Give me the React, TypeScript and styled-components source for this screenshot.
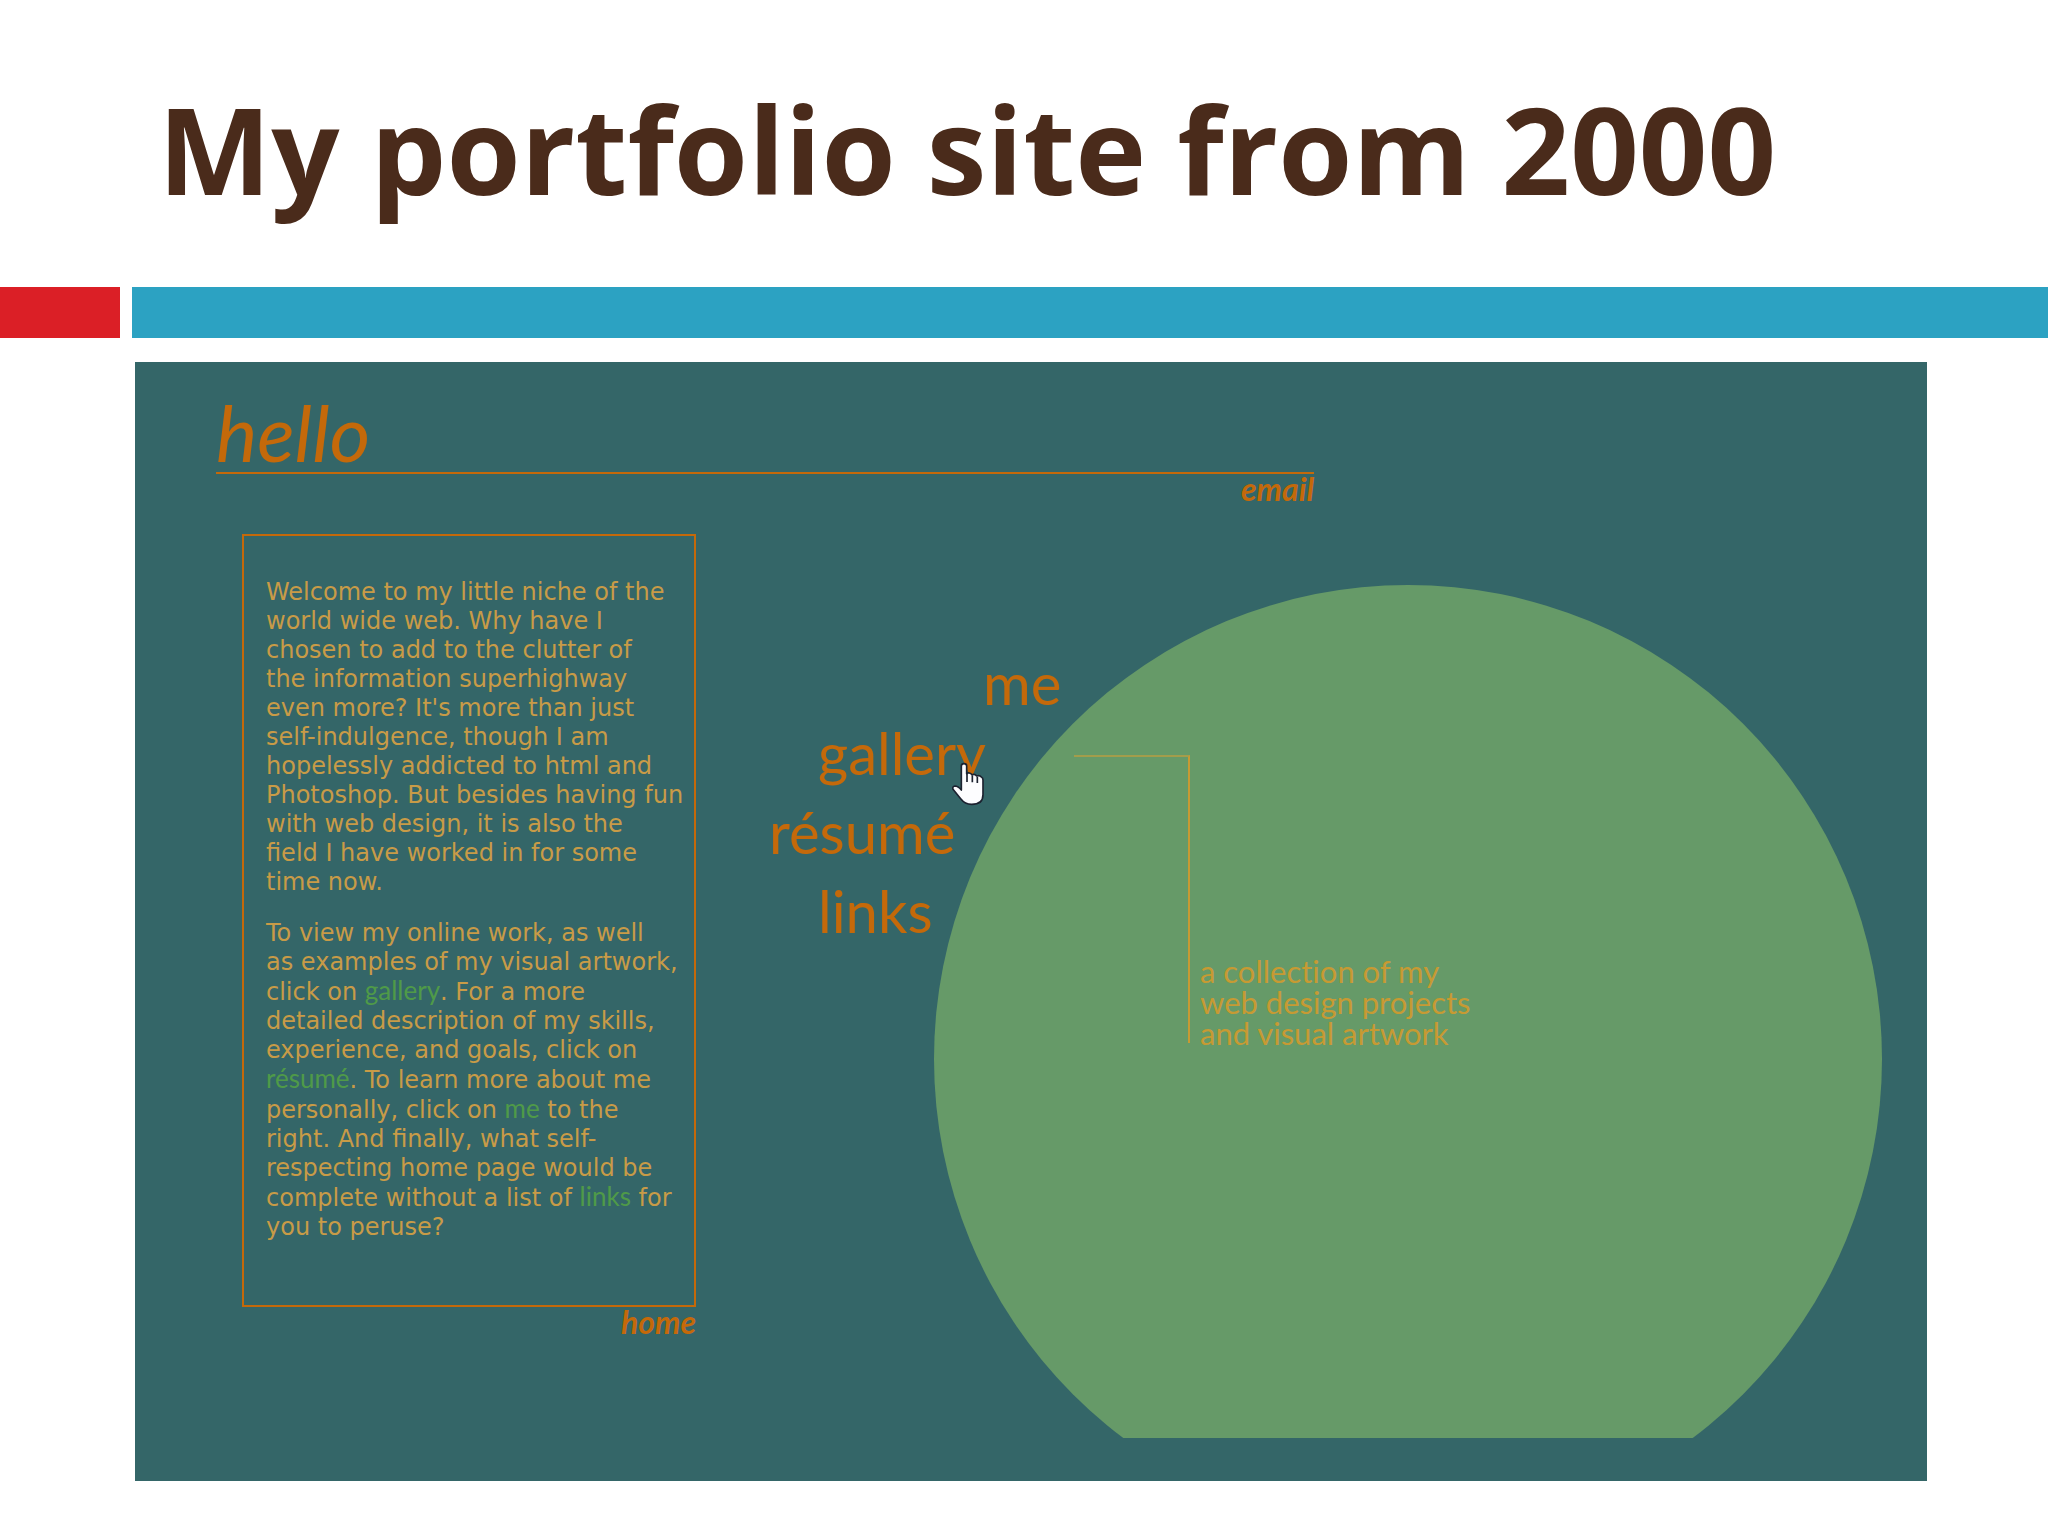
import React from "react";
import styled, { createGlobalStyle } from "styled-components";

const color = {
  title: "#4a2b1b",
  red: "#db1f26",
  blue: "#2ca2c2",
  teal: "#346668",
  leaf: "#669a68",
  orange: "#c4690a",
  sand: "#c89b47",
  link: "#4f9a48",
  note: "#c79a33",
};

const gothic = `"Century Gothic", Lato, sans-serif`;

const GlobalStyle = createGlobalStyle`
  *, *::before, *::after { box-sizing: border-box; }
  body { margin: 0; background: #fff; }
  h1, h2, p { margin: 0; }
  a { color: inherit; text-decoration: none; }
`;

const Slide = styled.div`
  padding-bottom: 55px;
`;

const Title = styled.h1`
  padding: 79px 158px 68px;
  color: ${color.title};
  font: 700 120px/140px "Open Sans", sans-serif;
`;

const Stripe = styled.div`
  display: grid;
  grid-template-columns: 120px 1fr;
  column-gap: 12px;
  height: 51px;
`;

const Block = styled.span<{ $fill: string }>`
  background: ${(p) => p.$fill};
`;

const Site = styled.main`
  margin: 24px 121px 0 135px;
  padding-bottom: 43px;
  background: ${color.teal};
  color: ${color.orange};
  font-family: ${gothic};
`;

const Masthead = styled.header`
  display: flex;
  flex-direction: column;
  width: 65.8%;
  height: 172px;
  padding-left: 81px;
`;

const Greeting = styled.h2`
  height: 112px;
  padding-top: 26px;
  border-bottom: 2px solid ${color.orange};
  font-weight: 400;
  font-style: italic;
  font-size: 78px;
  line-height: 88px;
`;

const CornerLink = styled.a`
  align-self: flex-end;
  font-size: 32px;
  font-style: italic;
  font-weight: 700;
  line-height: 29px;
`;

const Columns = styled.div`
  display: grid;
  grid-template-columns: minmax(0, 454fr) minmax(0, 238fr) minmax(0, 948fr);
  align-items: start;
  padding: 0 45px 0 107px;
`;

const Intro = styled.section`
  display: flex;
  flex-direction: column;
`;

const Frame = styled.div`
  display: flex;
  flex-direction: column;
  gap: 22px;
  padding: 42px 0 63px 22px;
  border: 2px solid ${color.orange};
  color: ${color.sand};
  font: 24px/29px Verdana, "DejaVu Sans", sans-serif;
  white-space: nowrap;
`;

const TextLink = styled.a`
  && { color: ${color.link}; }
  font-family: ${gothic};
  font-size: 26px;
  font-weight: 400;
  line-height: 27px;
`;

const Menu = styled.nav`
  z-index: 1;
  display: flex;
  flex-direction: column;
  align-items: flex-start;
  padding: 114px 0 0 73px;
  font-size: 58px;
  font-weight: 400;
  line-height: 70px;
`;

const MenuLink = styled.a<{ $indent: number; $gap?: number }>`
  position: relative;
  margin-left: ${(p) => p.$indent}px;
  margin-top: ${(p) => p.$gap ?? 0}px;
`;

const Pointer = styled.svg`
  position: absolute;
  left: 133px;
  top: 44px;
  width: 34px;
  height: 44px;
`;

const Disc = styled.section`
  position: relative;
  margin-top: 51px;
  aspect-ratio: 948 / 853;
  overflow: hidden;
  padding: 170px 0 0 140px;
  &::before {
    content: "";
    position: absolute;
    inset: 0 0 auto;
    aspect-ratio: 1;
    border-radius: 50%;
    background: ${color.leaf};
  }
`;

const Callout = styled.div`
  position: relative;
  display: flex;
  gap: 10px;
  color: ${color.note};
`;

const Elbow = styled.span`
  width: 116px;
  height: 288px;
  border: solid ${color.note};
  border-color: #a39d4b ${color.note};
  border-width: 2px 2px 0 0;
`;

const Note = styled.p`
  padding-top: 201px;
  font-size: 31px;
  font-weight: 400;
  font-variant-ligatures: none;
  line-height: 31px;
`;

const HandPointer = () => (
  <Pointer viewBox="0 0 102 132" aria-hidden="true">
    <path
      d="M31 80V12q0-7 8-7t8 7v23q3-3 8-2t8 5q9-3 14 4 9-3 14 3 5 2 5 9v44q0 29-34 29-20 0-33-17L6 82q-3-8 6-10 9 0 19 12z"
      fill="#fdfdff"
      stroke="#1c2230"
      strokeWidth="5"
      strokeLinejoin="round"
    />
    <path d="M48 36v24M64 40v21M79 44v19" stroke="#1c2230" strokeWidth="5" fill="none" />
  </Pointer>
);

export default function App() {
  return (
    <>
      <GlobalStyle />
      <Slide>
        <Title>My portfolio site from 2000</Title>
        <Stripe>
          <Block $fill={color.red} />
          <Block $fill={color.blue} />
        </Stripe>
        <Site>
          <Masthead>
            <Greeting>hello</Greeting>
            <CornerLink href="#email">email</CornerLink>
          </Masthead>
          <Columns>
            <Intro>
              <Frame>
                <p>
                  Welcome to my little niche of the<br />
                  world wide web. Why have I<br />
                  chosen to add to the clutter of<br />
                  the information superhighway<br />
                  even more? It's more than just<br />
                  self-indulgence, though I am<br />
                  hopelessly addicted to html and<br />
                  Photoshop. But besides having fun<br />
                  with web design, it is also the<br />
                  field I have worked in for some<br />
                  time now.
                </p>
                <p>
                  To view my online work, as well<br />
                  as examples of my visual artwork,<br />
                  click on <TextLink href="#gallery">gallery</TextLink>. For a more<br />
                  detailed description of my skills,<br />
                  experience, and goals, click on<br />
                  <TextLink href="#resume">résumé</TextLink>. To learn more about me<br />
                  personally, click on <TextLink href="#me">me</TextLink> to the<br />
                  right. And finally, what self-<br />
                  respecting home page would be<br />
                  complete without a list of <TextLink href="#links">links</TextLink> for<br />
                  you to peruse?
                </p>
              </Frame>
              <CornerLink href="#home">home</CornerLink>
            </Intro>
            <Menu>
              <MenuLink href="#me" $indent={214}>me</MenuLink>
              <MenuLink href="#gallery" $indent={49}>
                gallery
                <HandPointer />
              </MenuLink>
              <MenuLink href="#resume" $indent={0} $gap={9}>résumé</MenuLink>
              <MenuLink href="#links" $indent={49} $gap={9}>links</MenuLink>
            </Menu>
            <Disc>
              <Callout>
                <Elbow />
                <Note>
                  a collection of my<br />
                  web design projects<br />
                  and visual artwork
                </Note>
              </Callout>
            </Disc>
          </Columns>
        </Site>
      </Slide>
    </>
  );
}
